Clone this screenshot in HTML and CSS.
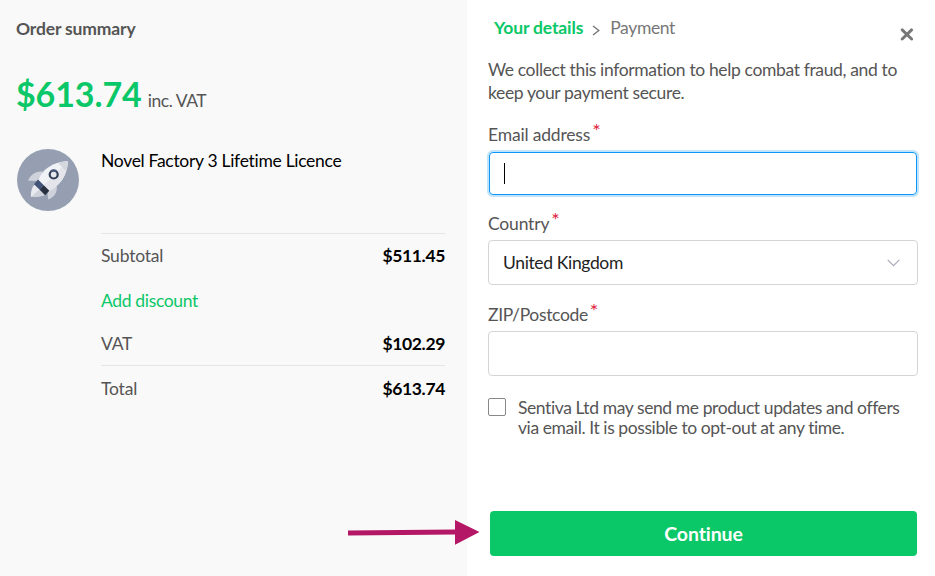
FILE: index.html
```
<!DOCTYPE html>
<html lang="en">
<head>
    <meta charset="UTF-8">
    <meta name="viewport" content="width=device-width, initial-scale=1.0">
    <title>Checkout</title>
    <link rel="stylesheet" href="styles.css">
</head>
<body>
    <div class="checkout">
        <aside class="summary">
            <h2 class="summary-title">Order summary</h2>
            <div class="price">
                <span class="amount">$613.74</span>
                <span class="tax">inc. VAT</span>
            </div>
            <div class="product">
                <svg class="product-icon" viewBox="0 0 62 62" width="62" height="62">
                    <circle cx="31" cy="31" r="31" fill="#959fb1"/>
                    <path d="M26 22.500C19 22 14 25 11 31.500L20 32Z" fill="#cfd2db"/>
                    <path d="M39.500 36C41 43 37.500 48 31 50.500L30.500 42Z" fill="#cfd2db"/>
                    <path d="M18 35L28.500 45.500C25 47.500 19 48 14 48C13.500 43 15 38 18 35Z" fill="#e9eaef"/>
                    <path d="M23 40L28.500 45.500C25 47.500 19 48 14 48Z" fill="#cfd2db"/>
                    <path d="M21 31C25 21 35 13 51 12C50 28 42 37 32 42Z" fill="#f1f2f6"/>
                    <path d="M51 12C50 28 42 37 32 42L26.500 36.500Z" fill="#e4e5eb"/>
                    <path d="M51 12C47 12.200 43.800 12.900 41 14L49 22C50 19 50.800 16 51 12Z" fill="#d5d7de"/>
                    <path d="M21 30.500L26.800 36.300L22.700 40.800L17 35.200Z" fill="#435478"/>
                    <path d="M26.800 36.300L32.300 41.800L28.200 46.200L22.700 40.800Z" fill="#29303f"/>
                    <circle cx="36.700" cy="25.500" r="4" fill="#e6e8ed" stroke="#323d57" stroke-width="2.200"/>
                    <path d="M33.900 22.700A4 4 0 0 1 39.500 22.700" fill="none" stroke="#465779" stroke-width="2.200"/>
                </svg>
                <span class="product-name">Novel Factory 3 Lifetime Licence</span>
            </div>
            <div class="totals">
                <div class="row subtotal"><span>Subtotal</span><b>$511.45</b></div>
                <div class="row discount"><a>Add discount</a></div>
                <div class="row vat"><span>VAT</span><b>$102.29</b></div>
                <div class="row total"><span>Total</span><b>$613.74</b></div>
            </div>
        </aside>

        <main class="details">
            <header class="header">
                <nav class="steps">
                    <span class="step active">Your details</span>
                    <svg class="step-arrow" viewBox="0 0 8 11" width="8" height="11"><path d="M1 1L6.800 5.500L1 10" fill="none" stroke="#777" stroke-width="1.400"/></svg>
                    <span class="step">Payment</span>
                </nav>
                <svg class="close" viewBox="0 0 14 13" width="14" height="13"><path d="M2.200 1.900L11.600 11M11.600 1.900L2.200 11" fill="none" stroke="#777" stroke-width="2.900" stroke-linecap="round"/></svg>
            </header>
            <p class="intro">We collect this information to help combat fraud, and to keep your payment secure.</p>

            <label class="label">Email address<span class="required">*</span></label>
            <div class="field focused"><span class="caret"></span></div>

            <label class="label">Country<span class="required">*</span></label>
            <div class="field select">
                <span class="value">United Kingdom</span>
                <svg viewBox="0 0 13 8" width="13" height="8"><path d="M.7 .8L6.500 6.600L12.300 .8" fill="none" stroke="#a9a7b8" stroke-width="1.100"/></svg>
            </div>

            <label class="label zip">ZIP/Postcode<span class="required">*</span></label>
            <div class="field"></div>

            <div class="consent">
                <span class="checkbox"></span>
                <span class="consent-text">Sentiva Ltd may send me product updates and offers via email. It is possible to opt-out at any time.</span>
            </div>

            <button class="continue">Continue</button>
        </main>

        <!-- pointer to the continue button -->
        <svg class="pointer" viewBox="0 0 134 26" width="134" height="26">
            <path d="M1 10.500L108 9.500V14.500L1 15.500Z" fill="#b31766"/>
            <path d="M108 0L132.500 12L108 24.700Z" fill="#b31766"/>
        </svg>
    </div>
</body>
</html>
```
FILE: styles.css
```
* {
    box-sizing: border-box;
}

body {
    margin: 0;
    background: #fff;
    color: #555;
    font-family: Lato, sans-serif;
    font-size: 17.5px;
    letter-spacing: -0.36px;
    overflow: hidden;
}

.checkout {
    position: relative;
    display: flex;
    width: 935px;
    height: 576px;
}

.summary {
    width: 467px;
    padding: 17px 22px 0 16px;
    background: #f9f9f9;
}

.summary-title {
    margin: 0;
    font-size: 17.5px;
    line-height: 24px;
    font-weight: 700;
    letter-spacing: -0.15px;
}

.price {
    display: flex;
    align-items: baseline;
    gap: 6px;
    height: 61px;
    margin-top: 31px;
    line-height: 44px;
}

.amount {
    color: #0ac767;
    font-size: 34px;
    font-weight: 700;
    letter-spacing: -0.1px;
}

.tax {
    letter-spacing: -0.45px;
}

.product {
    display: flex;
    gap: 22px;
    height: 84px;
    margin-top: 16px;
    padding-left: 1px;
}

.product-icon {
    flex: none;
}

.product-name {
    color: #000;
    line-height: 23px;
    letter-spacing: -0.3px;
}

.totals {
    margin-left: 85px;
    width: 344px;
}

.row {
    display: flex;
    justify-content: space-between;
    line-height: 46px;
    height: 44px;
    letter-spacing: -0.2px;
}

.row b {
    color: #000;
    letter-spacing: -0.36px;
}

.row a {
    color: #0ac767;
    letter-spacing: -0.34px;
}

.subtotal,
.total {
    border-top: 1px solid #e5e5e5;
    height: 45px;
}

.subtotal {
    line-height: 44px;
}

.vat {
    height: 43px;
    line-height: 44px;
}

.details {
    flex: 1;
    padding: 16px 17px 0 21px;
}

.header {
    display: flex;
    justify-content: space-between;
    padding: 0 4px 0 6px;
}

.steps {
    display: flex;
    line-height: 24px;
}

.step {
    color: #777;
}

.step.active {
    color: #0ac767;
    font-weight: 700;
    letter-spacing: -0.13px;
}

.step-arrow {
    margin: 9px 10px 0 9px;
}

.close {
    margin-top: 12px;
}

.intro {
    margin: 17px 0 19px;
    line-height: 23px;
}

.label {
    display: flex;
    height: 24px;
    margin-bottom: 4px;
    line-height: 24px;
    letter-spacing: -0.18px;
}

.required {
    margin: -5px 0 0 2px;
    color: #e0213c;
    font-size: 20px;
}

.field {
    display: flex;
    align-items: center;
    height: 45px;
    margin-bottom: 16px;
    padding: 0 14px;
    border: 1px solid #d5d5d5;
    border-radius: 4px;
}

.focused {
    height: 43px;
    margin: 5px 1px 17px;
    border-color: #0d96f8;
    box-shadow: 0 0 0 2px #bfe4fc;
}

.caret {
    width: 1px;
    height: 21px;
    background: #000;
}

.select {
    justify-content: space-between;
    margin-bottom: 18px;
    padding-right: 17px;
    color: #222;
}

.value {
    padding-bottom: 1px;
}

.consent {
    display: flex;
    gap: 12px;
    margin-top: 22px;
    line-height: 20px;
}

.consent-text {
    letter-spacing: -0.41px;
}

.zip {
    letter-spacing: -0.35px;
}

.checkbox {
    flex: none;
    width: 18px;
    height: 18px;
    border: 1px solid #888;
    border-radius: 2px;
}

.continue {
    display: block;
    width: 427px;
    height: 45px;
    margin: 73px 0 0 2px;
    padding: 0;
    border: 0;
    border-radius: 4px;
    background: #0ac767;
    color: #fff;
    font: 700 19.5px Lato, sans-serif;
    letter-spacing: -0.1px;
}

.pointer {
    position: absolute;
    left: 347px;
    top: 520px;
}
```
